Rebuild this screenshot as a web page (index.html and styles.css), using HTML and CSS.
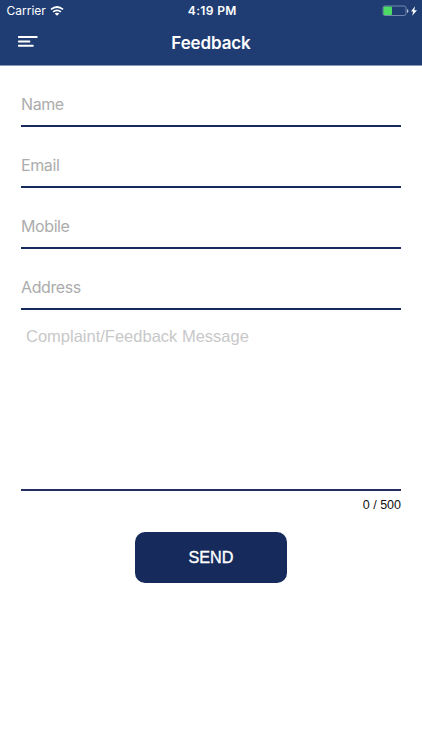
FILE: index.html
```html
<!DOCTYPE html>
<html lang="en">
<head>
<meta charset="utf-8">
<title>Feedback</title>
<link rel="stylesheet" href="styles.css">
</head>
<body>
<header class="header">
  <div class="status">
    <div class="carrier"><span>Carrier</span>
      <svg class="wifi" width="14" height="10" viewBox="0 0 14 10" fill="none" stroke="#fff" stroke-width="1.8"><path d="M1 3.4Q7-1.4 13 3.4M3.1 5.9Q7 2.8 10.9 5.9"/><path d="M7 9.8L4.7 7.5Q7 5.8 9.3 7.5Z" fill="#fff" stroke="none"/></svg>
    </div>
    <div class="time">4:19 PM</div>
    <svg class="battery" width="36" height="12" viewBox="0 0 36 12"><rect x="1" y="1" width="23" height="9.5" rx="1.8" fill="none" stroke="#7187ae"/><rect x="1.5" y="1.5" width="8.5" height="8.5" rx="1" fill="#4cd964"/><path d="M25 4v4q1.5-.5 1.5-2T25 4Z" fill="#b4c0d5"/><path d="M33 1.2L29 6.4H31.2L30.2 10.8L35 5.2H32.3Z" fill="#fff"/></svg>
  </div>
  <nav class="nav">
    <svg class="menu" width="20" height="12" viewBox="0 0 20 12" fill="#fff"><rect y="0" width="19.5" height="2" rx=".6"/><rect y="4.4" width="12.3" height="2" rx=".6"/><rect y="8.7" width="15.7" height="2" rx=".6"/></svg>
    <h1 class="title">Feedback</h1>
  </nav>
</header>
<main class="form">
  <div class="field"><span class="name">Name</span></div>
  <div class="field"><span class="email">Email</span></div>
  <div class="field"><span class="mobile">Mobile</span></div>
  <div class="field"><span class="address">Address</span></div>
  <div class="message"><span class="prompt">Complaint/Feedback Message</span></div>
  <div class="count"><span>0 / 500</span></div>
  <button class="send"><span>SEND</span></button>
</main>
</body>
</html>
```
FILE: styles.css
```css
* { box-sizing: border-box; }
body { margin: 0; height: 750px; background: #fff; font-family: Inter, "Liberation Sans", sans-serif; overflow: hidden; }
.header { height: 66px; background: #1f3d73; color: #fff; border-bottom: 1px solid #8b9ab6; }
.status { height: 22px; display: grid; grid-template-columns: 1fr auto 1fr; align-items: center; padding: 0 4px 0 6.5px; font-size: 12px; }
.carrier { display: flex; align-items: center; gap: 4px; line-height: 14px; }
.wifi { margin-top: -1px; }
.time { font-weight: 600; font-size: 12px; line-height: 14px; letter-spacing: .35px; margin-top: -1px; }
.battery { justify-self: end; }
.nav { height: 43px; display: grid; grid-template-columns: 1fr auto 1fr; align-items: center; padding: 0 18px; }
.menu { margin-top: -3px; }
.title { margin: -2px 0 0; font-size: 17px; font-weight: 600; line-height: 22px; letter-spacing: -.12px; }
.form { padding: 0 21px; display: flex; flex-direction: column; }
.field { height: 61px; border-bottom: 2px solid #162b5b; padding-top: 27px; font-size: 16px; line-height: 22px; letter-spacing: -.4px; color: #acacac; }
.message { height: 181px; border-bottom: 2px solid #242e60; padding: 15px 5px; font-family: "Liberation Sans", sans-serif; font-size: 16.5px; line-height: 22px; color: #c8c8c9; }
.count { padding-top: 6px; text-align: right; font-family: "Liberation Sans", sans-serif; font-size: 12.5px; line-height: 16px; color: #111; }
.send { width: 152.5px; height: 51px; margin: 19px auto 0; border: 0; border-radius: 10px; background: #162b5b; color: #fff; font: 400 16.2px "Liberation Sans", sans-serif; -webkit-text-stroke: .35px #fff; }
```
